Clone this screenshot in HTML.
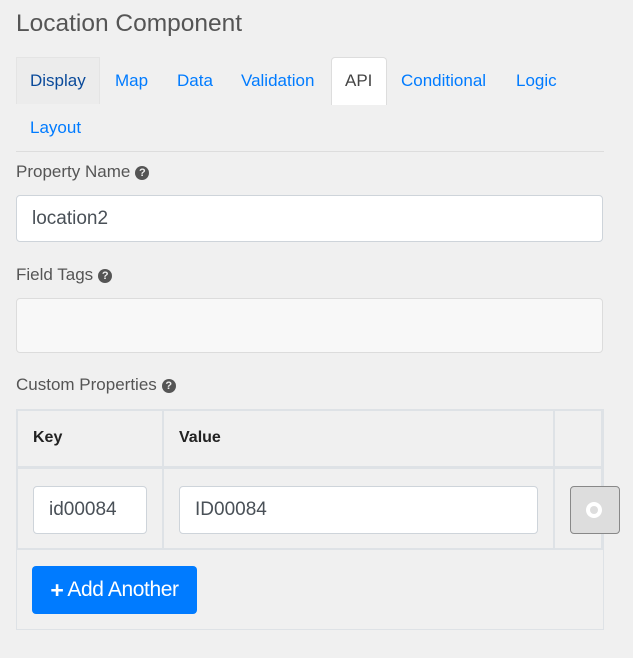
<!DOCTYPE html><html><head><style>
body{margin:0;width:633px;height:658px;background:#f0f0f0;font-family:"Liberation Sans",Arial,sans-serif;position:relative;overflow:hidden}
.a{position:absolute}
.t{color:#007bff;font-size:17px}
.lbl{color:#555;font-size:17px}
.q{display:inline-block;width:14px;height:14px;border-radius:50%;background:#555;color:#f0f0f0;font-size:11px;font-weight:bold;text-align:center;line-height:14px;vertical-align:1px;margin-left:5px}
.in{position:absolute;background:#fff;border:1px solid #ced4da;border-radius:4px;box-sizing:border-box;font-size:19px;color:#495057;padding-left:15px;display:flex;align-items:center}
</style></head><body>
<div class="a" style="left:16px;top:10px;font-size:24.5px;color:#555">Location Component</div>
<div class="a" style="left:16px;top:57px;width:84px;height:47px;border:1px solid #e4e4e4;border-bottom:none;box-sizing:border-box;background:#ececec"></div>
<div class="a" style="left:331px;top:57px;width:56px;height:48px;border:1px solid #ddd;border-bottom:none;border-radius:4px 4px 0 0;box-sizing:border-box;background:#fff"></div>
<div class="a t" style="left:30px;top:71px;color:#0a4a9a">Display</div>
<div class="a t" style="left:115px;top:71px">Map</div>
<div class="a t" style="left:177px;top:71px">Data</div>
<div class="a t" style="left:241px;top:71px">Validation</div>
<div class="a t" style="left:345px;top:71px;color:#444">API</div>
<div class="a t" style="left:401px;top:71px">Conditional</div>
<div class="a t" style="left:516px;top:71px">Logic</div>
<div class="a t" style="left:30px;top:118px">Layout</div>
<div class="a" style="left:16px;top:151px;width:588px;height:1px;background:#ddd"></div>
<div class="a lbl" style="left:16px;top:162px">Property Name<span class="q">?</span></div>
<div class="in" style="left:16px;top:195px;width:587px;height:47px">location2</div>
<div class="a lbl" style="left:16px;top:265px">Field Tags<span class="q">?</span></div>
<div class="in" style="left:16px;top:298px;width:587px;height:55px;background:#f8f8f8;border-color:#dcdcdc"></div>
<div class="a lbl" style="left:16px;top:375px">Custom Properties<span class="q">?</span></div>
<div class="a" style="left:16px;top:409px;width:588px;height:221px;border:1px solid #dee2e6;box-sizing:border-box"></div>
<div class="a" style="left:16px;top:409px;width:588px;height:2px;background:#dee2e6"></div>
<div class="a" style="left:16px;top:409px;width:2px;height:141px;background:#dee2e6"></div>
<div class="a" style="left:162px;top:409px;width:2px;height:141px;background:#dee2e6"></div>
<div class="a" style="left:553px;top:409px;width:2px;height:141px;background:#dee2e6"></div>
<div class="a" style="left:601px;top:409px;width:2px;height:141px;background:#dee2e6"></div>
<div class="a" style="left:16px;top:466px;width:588px;height:3px;background:#dee2e6"></div>
<div class="a" style="left:16px;top:548px;width:588px;height:2px;background:#dee2e6"></div>
<div class="a" style="left:33px;top:429px;font-size:16px;font-weight:bold;color:#222">Key</div>
<div class="a" style="left:179px;top:429px;font-size:16px;font-weight:bold;color:#222">Value</div>
<div class="in" style="left:33px;top:486px;width:114px;height:48px">id00084</div>
<div class="in" style="left:179px;top:486px;width:359px;height:48px">ID00084</div>
<div class="a" style="left:570px;top:486px;width:50px;height:48px;background:#ddd;border:1px solid #888;border-radius:4px;box-sizing:border-box">
<div class="a" style="left:15px;top:15px;width:16px;height:16px;border-radius:50%;background:#fff"></div>
<div class="a" style="left:19px;top:19px;width:8px;height:8px;border-radius:50%;background:#ddd"></div></div>
<div class="a" style="left:32px;top:566px;width:165px;height:48px;background:#007bff;border-radius:4px;color:#fff;font-size:21px;display:flex;align-items:center;justify-content:center;letter-spacing:-0.4px"><b style="font-size:23px;margin-right:4px">+</b>Add Another</div>
</body></html>
